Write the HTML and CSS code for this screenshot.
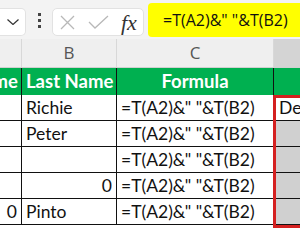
FILE: index.html
```html
<!doctype html>
<html lang="en">
<head>
	<meta charset="UTF-8">
	<title>T function</title>
	<link rel="stylesheet" href="styles.css">
</head>
<body>
	<div class="sheet">
		<div class="toolbar">
			<div class="namebox">
				<svg class="chev" width="12" height="6" viewBox="0 0 12 6"><path d="M0.5 0.5 L6 5.5 L11.5 0.5" fill="none" stroke="#333" stroke-width="1.2"/></svg>
			</div>
			<div class="dots"><i></i><i></i><i></i></div>
			<div class="fxbox">
				<svg width="15" height="15" viewBox="0 0 15 15"><path d="M1 1 L14 14 M14 1 L1 14" stroke="#b8b8b8" stroke-width="1.3" fill="none"/></svg>
				<svg width="21" height="14" viewBox="0 0 21 14"><path d="M1 7 L7 13 L20 1" stroke="#b8b8b8" stroke-width="1.3" fill="none"/></svg>
				<span class="fx">fx</span>
			</div>
			<div class="formula-input">=T(A2)&amp;" "&amp;T(B2)</div>
		</div>

		<div class="grid">
			<div class="colhead"></div>
			<div class="colhead">B</div>
			<div class="colhead">C</div>
			<div class="colhead sel"></div>

			<div class="cell title clip"><span>First Name</span></div>
			<div class="cell title">Last Name</div>
			<div class="cell title center">Formula</div>
			<div class="cell title"></div>

			<div class="cell"></div>
			<div class="cell">Richie</div>
			<div class="cell">=T(A2)&amp;" "&amp;T(B2)</div>
			<div class="cell active">De</div>

			<div class="cell"></div>
			<div class="cell">Peter</div>
			<div class="cell">=T(A2)&amp;" "&amp;T(B2)</div>
			<div class="cell shade"></div>

			<div class="cell"></div>
			<div class="cell"></div>
			<div class="cell">=T(A2)&amp;" "&amp;T(B2)</div>
			<div class="cell shade"></div>

			<div class="cell"></div>
			<div class="cell right">0</div>
			<div class="cell">=T(A2)&amp;" "&amp;T(B2)</div>
			<div class="cell shade"></div>

			<div class="cell right">0</div>
			<div class="cell">Pinto</div>
			<div class="cell">=T(A2)&amp;" "&amp;T(B2)</div>
			<div class="cell shade"></div>

			<div class="selection"></div>
		</div>
	</div>
</body>
</html>
```

FILE: styles.css
```css
*{
	padding: 0;
	margin: 0;
	box-sizing: border-box;
}
html,body{
	width: 300px;
	height: 249px;
	overflow: hidden;
	background: #ffffff;
}

.sheet{
	width: 300px;
	height: 249px;
}

.toolbar{
	height: 39px;
	background: #f3f3f3;
	display: flex;
	align-items: flex-start;
}
.namebox{
	width: 26px;
	height: 28px;
	margin-top: 8px;
	background: #ffffff;
	border: 1px solid #e2e2e2;
	border-left: 0;
	border-radius: 0 5px 5px 0;
	display: flex;
	align-items: center;
	padding-left: 7px;
}
.dots{
	width: 26px;
	height: 39px;
	display: flex;
	flex-direction: column;
	align-items: center;
	justify-content: center;
	gap: 3px;
	padding-top: 2px;
}
.dots i{
	width: 3px;
	height: 3px;
	background: #444;
}
.fxbox{
	width: 92px;
	height: 28px;
	margin-top: 8px;
	background: #ffffff;
	border: 1px solid #e2e2e2;
	border-radius: 5px;
	display: flex;
	align-items: center;
	padding-left: 7px;
	gap: 13px;
}
.fx{
	font-family: "Liberation Serif", serif;
	font-style: italic;
	font-size: 22px;
	color: #333;
	margin-left: -1px;
	margin-top: 2px;
}
.formula-input{
	flex: 1;
	height: 34px;
	margin-top: 3px;
	margin-left: 4px;
	background: #ffff00;
	border-radius: 4px 0 0 4px;
	font-family: "Open Sans", sans-serif;
	font-size: 16px;
	color: #111;
	line-height: 34px;
	padding-left: 15px;
	white-space: nowrap;
}

.grid{
	position: relative;
	display: grid;
	grid-template-columns: 22px 95px 157px 30px;
	grid-template-rows: 29px 27px repeat(5, 26px);
}
.colhead{
	background: #efefef;
	border-right: 1px solid #d8d8d8;
	border-bottom: 1px solid #d0d0d0;
	font-family: "Open Sans", sans-serif;
	font-size: 17px;
	color: #555;
	text-align: center;
	line-height: 28px;
}
.colhead.sel{
	background: #d4d4d4;
	border-right: 0;
}

.cell{
	font-family: Lato, "Liberation Sans", sans-serif;
	font-size: 17.5px;
	color: #111;
	border-right: 1px solid #111;
	border-bottom: 1px solid #111;
	padding: 0 4px;
	line-height: 25px;
	white-space: nowrap;
	overflow: hidden;
}
.cell.title{
	background: #00b050;
	color: #ffffff;
	font-weight: bold;
	font-size: 18.5px;
	line-height: 27px;
	border-bottom: 0;
}
.cell.clip{
	display: flex;
	justify-content: flex-end;
	padding-right: 3px;
}
.right{
	text-align: right;
}
.center{
	text-align: center;
}
.cell.shade{
	background: #d0d0d0;
}
.cell.active{
	padding-left: 5px;
}

.selection{
	position: absolute;
	left: 273px;
	top: 56px;
	width: 40px;
	height: 133px;
	border: 3px solid #d42020;
}
```
